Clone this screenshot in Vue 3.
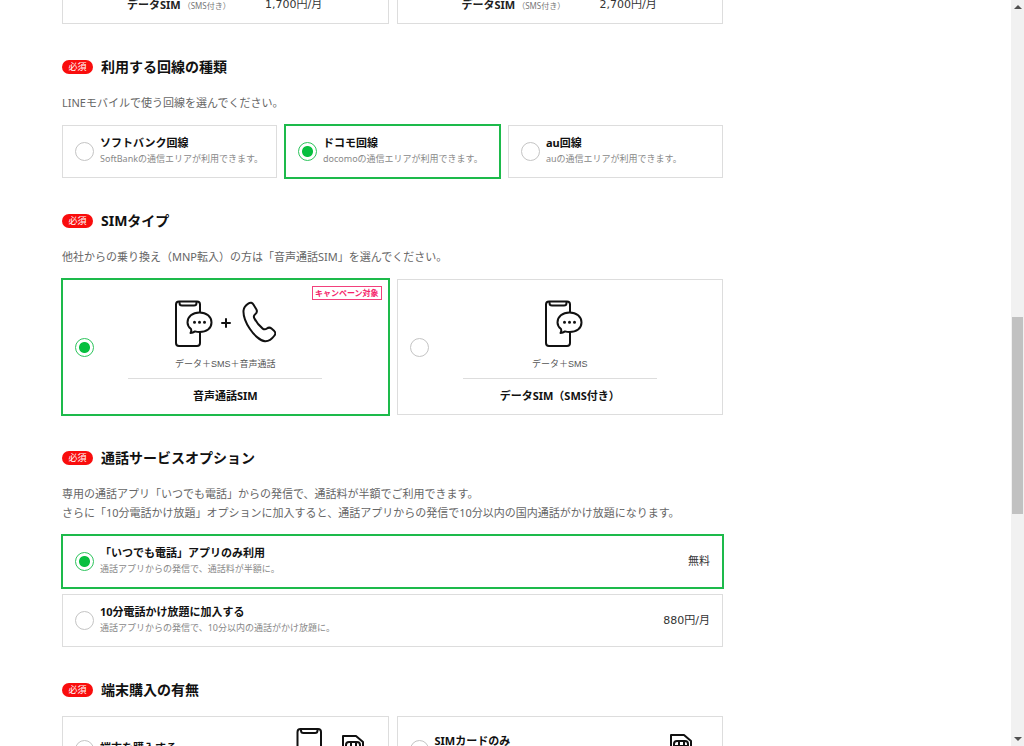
<script setup>
import { ref } from 'vue'

const plans = [
  { name: 'データSIM', note: '（SMS付き）', price: '1,700円/月' },
  { name: 'データSIM', note: '（SMS付き）', price: '2,700円/月' },
]
const lines = [
  { id: 'softbank', name: 'ソフトバンク回線', text: 'SoftBankの通信エリアが利用できます。' },
  { id: 'docomo', name: 'ドコモ回線', text: 'docomoの通信エリアが利用できます。' },
  { id: 'au', name: 'au回線', text: 'auの通信エリアが利用できます。' },
]
const calls = [
  { id: 'app', name: '「いつでも電話」アプリのみ利用', text: '通話アプリからの発信で、通話料が半額に。', price: '無料' },
  { id: 'ten', name: '10分電話かけ放題に加入する', text: '通話アプリからの発信で、10分以内の通話がかけ放題に。', price: '880円/月' },
]
const line = ref('docomo')
const sim = ref('voice')
const call = ref('app')
const device = ref('')
</script>

<template>
  <div class="page">
    <main class="content">
      <div class="cols two">
        <dl v-for="p in plans" :key="p.price" class="plan">
          <dt>{{ p.name }}<small>{{ p.note }}</small></dt>
          <dd>{{ p.price }}</dd>
        </dl>
      </div>

      <section>
        <h2><span class="pill">必須</span>利用する回線の種類</h2>
        <p class="lead">LINEモバイルで使う回線を選んでください。</p>
        <div class="cols three">
          <label v-for="l in lines" :key="l.id" class="card" :class="{ on: line === l.id }">
            <input v-model="line" type="radio" name="line" :value="l.id" />
            <span class="body"><b>{{ l.name }}</b><small>{{ l.text }}</small></span>
          </label>
        </div>
      </section>

      <section>
        <h2><span class="pill">必須</span>SIMタイプ</h2>
        <p class="lead">他社からの乗り換え（MNP転入）の方は「音声通話SIM」を選んでください。</p>
        <div class="cols two">
          <label class="card sim" :class="{ on: sim === 'voice' }">
            <input v-model="sim" type="radio" name="sim" value="voice" />
            <span class="figure">
              <svg width="102" height="48" viewBox="0 0 102 48" class="ink" aria-hidden="true">
                <path d="M26 12V4.500Q26 1.500 23 1.500H5Q2 1.500 2 4.500V43Q2 46 5 46H23Q26 46 26 43V33" />
                <path d="M5.500 2V3Q5.500 5.500 8 5.500H20Q22.500 5.500 22.500 3V2" />
                <path d="M16.500 33C17.500 31.500 17.600 30.300 17 29C14.800 27.200 13.500 25 13.500 22.500C13.500 16.700 18.500 12.500 25.500 12.500S37.500 16.700 37.500 22.500S32.500 32 25.500 32C23.800 32 22.400 31.800 21 31.400C19.700 32.400 18.200 33 16.500 33Z" />
                <path class="dots" d="M20.500 22.300h.01M25.500 22.300h.01M30.500 22.300h.01" />
                <path d="M48 23H56M52 19V27" />
                <path d="M74.600 3.300C76.500 2.100 78.300 2.600 79.400 4.400L82.300 9.200C83.400 11.100 82.800 12.900 81.200 14.200C79.800 15.300 79.500 16.700 80.300 18.300C82.600 22.800 85.300 26 88.700 28.600C90.200 29.700 91.600 29.500 92.900 28.500C94.500 27.300 96 27.300 97.500 28.600L100.300 31.100C101.700 32.500 101.700 34 100.500 35.500C98.300 38.500 95 41.500 91 41.300C86.500 40.800 80.200 35.500 75.800 28.800C71.600 22.400 69.200 15.200 69.500 10.600C69.700 7.500 72 4.900 74.600 3.300Z" />
              </svg>
              <small>データ＋SMS＋音声通話</small>
              <b>音声通話SIM</b>
            </span>
            <span class="badge">キャンペーン対象</span>
          </label>
          <label class="card sim" :class="{ on: sim === 'data' }">
            <input v-model="sim" type="radio" name="sim" value="data" />
            <span class="figure">
              <svg width="46" height="48" viewBox="-7 0 46 48" class="ink" aria-hidden="true">
                <path d="M26 12V4.500Q26 1.500 23 1.500H5Q2 1.500 2 4.500V43Q2 46 5 46H23Q26 46 26 43V33" />
                <path d="M5.500 2V3Q5.500 5.500 8 5.500H20Q22.500 5.500 22.500 3V2" />
                <path d="M16.500 33C17.500 31.500 17.600 30.300 17 29C14.800 27.200 13.500 25 13.500 22.500C13.500 16.700 18.500 12.500 25.500 12.500S37.500 16.700 37.500 22.500S32.500 32 25.500 32C23.800 32 22.400 31.800 21 31.400C19.700 32.400 18.200 33 16.500 33Z" />
                <path class="dots" d="M20.500 22.300h.01M25.500 22.300h.01M30.500 22.300h.01" />
              </svg>
              <small>データ＋SMS</small>
              <b>データSIM（SMS付き）</b>
            </span>
          </label>
        </div>
      </section>

      <section>
        <h2><span class="pill">必須</span>通話サービスオプション</h2>
        <p class="lead">
          専用の通話アプリ「いつでも電話」からの発信で、通話料が半額でご利用できます。<br />さらに「10分電話かけ放題」オプションに加入すると、通話アプリからの発信で10分以内の国内通話がかけ放題になります。
        </p>
        <div class="stack">
          <label v-for="c in calls" :key="c.id" class="card" :class="{ on: call === c.id }">
            <input v-model="call" type="radio" name="call" :value="c.id" />
            <span class="body"><b>{{ c.name }}</b><small>{{ c.text }}</small></span>
            <span class="price">{{ c.price }}</span>
          </label>
        </div>
      </section>

      <section>
        <h2><span class="pill">必須</span>端末購入の有無</h2>
        <div class="cols two">
          <label class="card device" :class="{ on: device === 'buy' }">
            <input v-model="device" type="radio" name="device" value="buy" />
            <span class="body"><b>端末を購入する</b></span>
            <svg width="80" height="42" viewBox="0 0 80 42" class="ink" aria-hidden="true">
              <path d="M1.500 41V4Q1.500 1 4.500 1H22Q25 1 25 4V41" />
              <path d="M5 1.500V2.500Q5 5 7.500 5H19Q21.500 5 21.500 2.500V1.500" />
              <path d="M47 8H60L67 14V34H47Z" />
              <path d="M53 14H61Q64 14 64 17V25Q64 28 61 28H53Q50 28 50 25V17Q50 14 53 14ZM55 14V28M60 14V28M50 19H64" />
            </svg>
          </label>
          <label class="card device" :class="{ on: device === 'sim' }">
            <input v-model="device" type="radio" name="device" value="sim" />
            <span class="body raised"><b>SIMカードのみ</b></span>
            <svg width="40" height="42" viewBox="0 0 40 42" class="ink" aria-hidden="true">
              <path d="M1 7H14L21 13V33H1Z" />
              <path d="M7 13H15Q18 13 18 16V24Q18 27 15 27H7Q4 27 4 24V16Q4 13 7 13ZM9 13V27M14 13V27M4 18H18" />
            </svg>
          </label>
        </div>
      </section>
    </main>

    <div class="scrollbar" aria-hidden="true">
      <svg width="8" height="4" viewBox="0 0 8 4"><path d="M4 0L8 4H0Z" /></svg>
      <div class="track"><div class="thumb"></div></div>
      <svg width="8" height="4" viewBox="0 0 8 4"><path d="M0 0H8L4 4Z" /></svg>
    </div>
  </div>
</template>

<style>
body {
  background: #fff;
}
</style>

<style scoped>
.page {
  display: flex;
  justify-content: space-between;
  height: 100vh;
  overflow: hidden;
  color: #222;
  font: 11px/16px "Noto Sans", "Noto Sans CJK JP", sans-serif;
}
.content {
  flex: 0 1 661px;
  margin-left: 62px;
}
section {
  padding-top: 33px;
}
h2 {
  display: flex;
  align-items: center;
  gap: 8px;
  margin: 0 0 16px;
  font-size: 14px;
  line-height: 20px;
  color: #111;
}
.pill {
  min-width: 31px;
  border-radius: 8px;
  background: #f90d0d;
  color: #fff;
  font-size: 9px;
  font-weight: 400;
  line-height: 14px;
  text-align: center;
}
.lead {
  margin: 0 0 13px;
  line-height: 19px;
  color: #666;
}
.cols {
  display: grid;
  gap: 8px;
}
.two {
  grid-template-columns: repeat(2, 1fr);
}
.three {
  grid-template-columns: repeat(3, 1fr);
}
.stack {
  display: grid;
  gap: 6px;
}
.plan {
  display: grid;
  grid-template-columns: 138px 1fr;
  margin: 0;
  padding: 0 0 12px 64px;
  border: 1px solid #ddd;
  border-top: 0;
  line-height: 10px;
}
.plan dt {
  font-weight: 700;
}
.plan dt small {
  margin-left: 2px;
  font-size: 8px;
  font-weight: 400;
  color: #777;
}
.plan dd {
  margin: 0;
}
.plan dd,
.price {
  font-family: "DejaVu Sans", "Noto Sans CJK JP", sans-serif;
  color: #333;
}
.card {
  position: relative;
  display: flex;
  align-items: center;
  gap: 6px;
  box-sizing: border-box;
  min-height: 53px;
  padding: 0 12px;
  border: 1px solid #ddd;
  background: #fff;
  white-space: nowrap;
}
.card.on {
  border-color: #1dba4b;
  box-shadow: 0 0 0 1px #1dba4b;
}
input {
  appearance: none;
  flex: none;
  box-sizing: border-box;
  width: 19px;
  height: 19px;
  margin: 0;
  border: 1px solid #c4c4c4;
  border-radius: 50%;
  background: #fff;
}
input:checked {
  border-color: #2dc45c;
  background: radial-gradient(circle, #07bf3f 5px, #fff 6px);
}
.body {
  flex: 1;
  display: flex;
  flex-direction: column;
  padding-bottom: 2px;
}
.body small {
  font-size: 9px;
  color: #888;
}
b {
  color: #111;
}
.sim {
  display: grid;
  grid-template-columns: 19px 1fr 19px;
  min-height: 136px;
}
.figure {
  display: flex;
  flex-direction: column;
  align-items: center;
  justify-self: center;
  width: 194px;
  padding-top: 10px;
}
.figure small {
  align-self: stretch;
  margin: 10px 0 9px;
  padding-bottom: 8px;
  border-bottom: 1px solid #ddd;
  font: 9px/12px "Liberation Sans", "Noto Sans CJK JP", sans-serif;
  text-align: center;
  color: #555;
}
.ink {
  fill: none;
  stroke: #111;
  stroke-width: 2;
  stroke-linecap: round;
  stroke-linejoin: round;
}
.dots {
  stroke-width: 3;
}
.badge {
  position: absolute;
  top: 6px;
  right: 6px;
  padding: 0 2px;
  border: 1px solid #f2407c;
  color: #f5226a;
  font-size: 8px;
  font-weight: 700;
  line-height: 12px;
}
.device {
  min-height: 66px;
}
.raised {
  padding-bottom: 16px;
}
.scrollbar {
  display: flex;
  flex-direction: column;
  align-items: center;
  gap: 12px;
  flex: none;
  box-sizing: border-box;
  width: 13px;
  padding: 5px 0;
  background: #f1f1f1;
}
.scrollbar svg {
  flex: none;
  fill: #505050;
}
.track {
  flex: 1;
  width: 11px;
}
.thumb {
  height: 28%;
  margin-top: 296px;
  background: #c1c1c1;
}
</style>
